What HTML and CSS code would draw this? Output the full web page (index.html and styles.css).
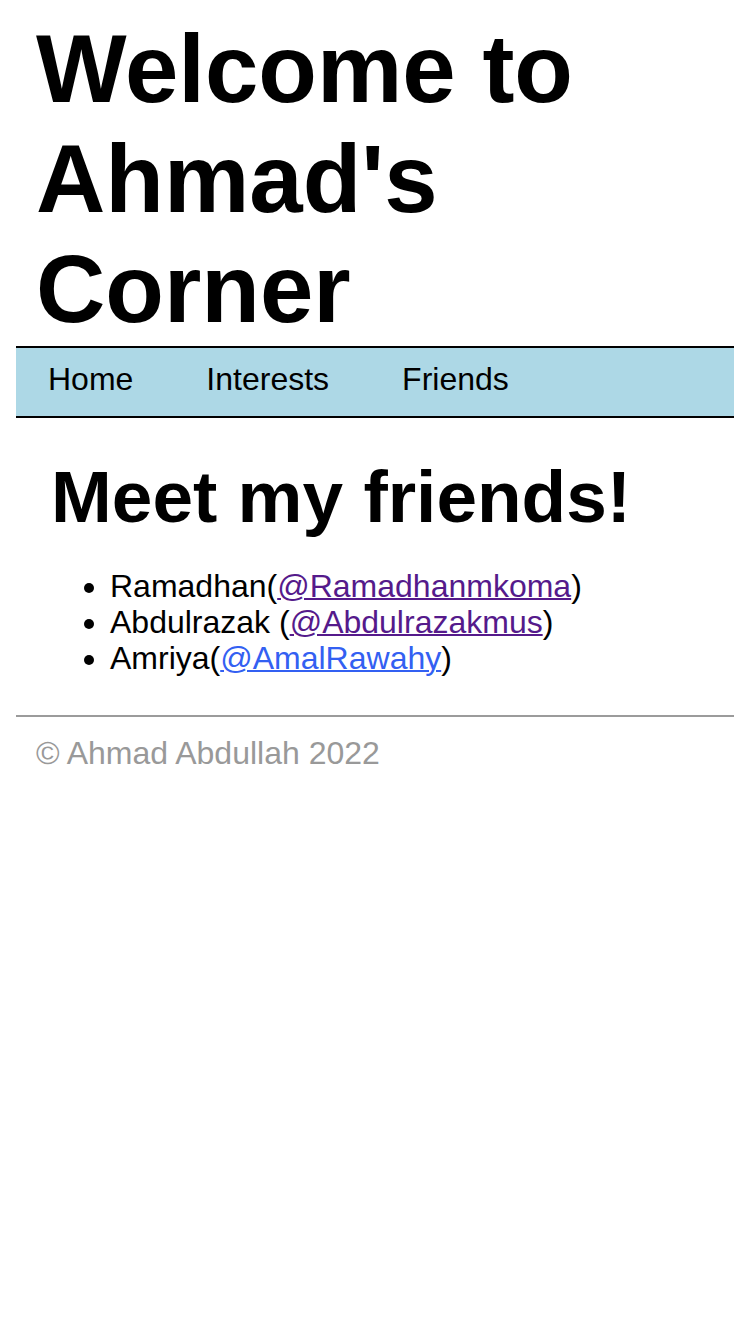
FILE: index.html
```html
<!DOCTYPE html>
<html lang="en">
<head>
<meta charset="utf-8">
<title>Ahmad's Corner</title>
<link rel="stylesheet" href="styles.css">
</head>
<body>
<header class="site-header">
  <h1 class="site-title">Welcome to Ahmad's Corner</h1>
</header>
<nav class="site-nav">
  <ul class="nav-list">
    <li><a class="nav-link" href="#home">Home</a></li>
    <li><a class="nav-link" href="#interests">Interests</a></li>
    <li><a class="nav-link" href="#friends">Friends</a></li>
  </ul>
</nav>
<main class="content">
  <h2 class="section-title">Meet my friends!</h2>
  <ul class="friends">
    <li>Ramadhan(<a class="friend-link visited" href="#r">@Ramadhanmkoma</a>)</li>
    <li>Abdulrazak (<a class="friend-link visited" href="#a">@Abdulrazakmus</a>)</li>
    <li>Amriya(<a class="friend-link" href="#m">@AmalRawahy</a>)</li>
  </ul>
</main>
<footer class="site-footer">
  <p class="copyright">© Ahmad Abdullah 2022</p>
</footer>
</body>
</html>
```

FILE: styles.css
```css
html, body {
  background: #ffffff;
}
body {
  margin: 0 16px;
  padding-top: 14px;
  font-family: "Liberation Sans", Arial, sans-serif;
  color: #000;
}
.site-header {
  padding: 0 20px;
}
.site-title {
  margin: 0;
  font-size: 96px;
  line-height: 110px;
  font-weight: bold;
  padding-right: 120px;
}
.site-nav {
  margin-top: 2px;
  background: #add8e6;
  border-top: 2px solid #000;
  border-bottom: 2px solid #000;
}
.nav-list {
  list-style: none;
  margin: 0;
  padding: 13px 32px 19px;
  display: flex;
  gap: 73px;
}
.nav-list li {
  font-size: 32px;
  line-height: 36px;
}
.nav-link {
  color: #000;
  text-decoration: none;
}
.content {
  padding: 0 0 0 35px;
}
.section-title {
  margin: 37px 0 0;
  font-size: 73px;
  line-height: 83px;
  font-weight: bold;
}
.friends {
  margin: 30px 0 0;
  padding-left: 59px;
  font-size: 32px;
  line-height: 36px;
}
.friend-link {
  color: #3360f2;
  text-decoration: underline;
  text-decoration-thickness: 2px;
}
.friend-link.visited {
  color: #551a8b;
}
.site-footer {
  margin-top: 39px;
  border-top: 2px solid #9b9b9b;
  padding: 0 20px;
}
.copyright {
  margin: 18px 0 0;
  font-size: 32px;
  line-height: 36px;
  color: #999999;
}
```
